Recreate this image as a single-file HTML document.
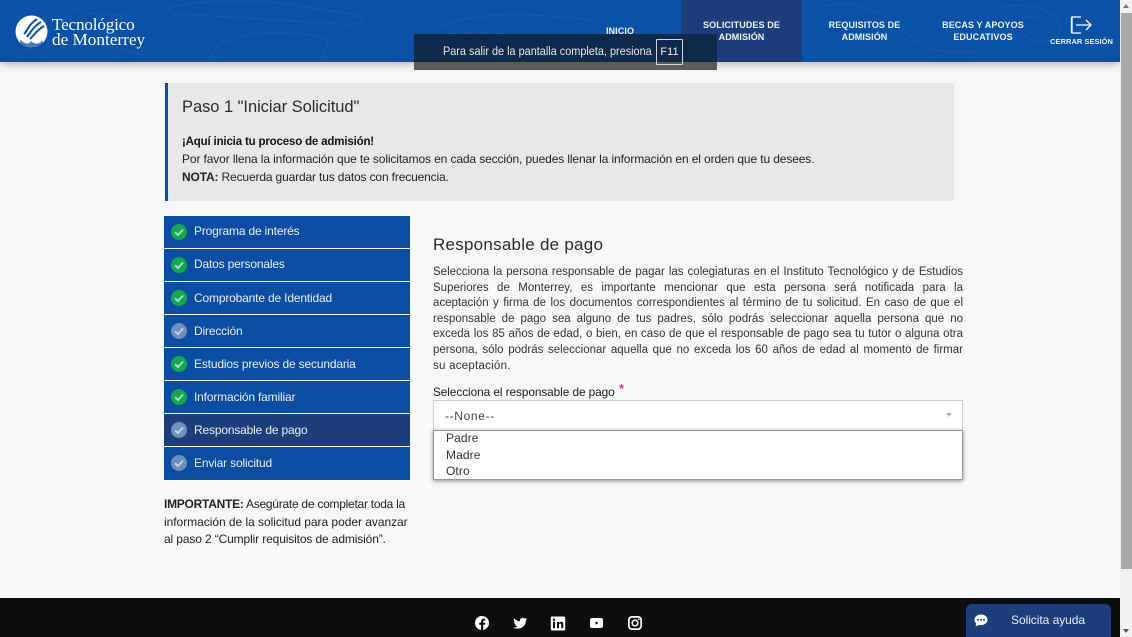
<!DOCTYPE html>
<html lang="es"><head><meta charset="utf-8"><title>Responsable de pago</title>
<style>
html,body{margin:0;padding:0;width:1132px;height:637px;overflow:hidden;background:#f7f8f8}
body{font-family:"Liberation Sans",sans-serif;color:#1c1c1c;position:relative}
.a{position:absolute;white-space:nowrap}
.hdr{left:0;top:0;width:1120px;height:62px;background:#0a51a8;box-shadow:0 2px 8px rgba(0,0,0,.28)}
.nav{color:#eef4fb;font-weight:bold;font-size:9px;line-height:11.5px;letter-spacing:.1px;text-align:center}
.t{font-size:12px;color:#222}
.j{left:433px;width:530px;font-size:11.5px;color:#333;text-align:justify;text-align-last:justify;white-space:nowrap}
.item{left:164px;width:246px;height:32px;background:#0a4da3;color:#e9f1fa;font-size:12px;letter-spacing:-.17px;line-height:31px}
.item span{position:absolute;left:30px;top:1px}
.item svg{position:absolute;left:7px;top:8px}
</style></head><body>

<div class="a hdr"></div>
<svg class="a" style="left:0;top:0" width="1120" height="62" fill="none" stroke="#2b69b6" stroke-opacity=".35" stroke-width="1.2">
<path d="M170 8C200 -2 270 0 300 6S350 12 360 17 355 25 340 24 220 16 172 14Z"/>
<path d="M210 60C215 34 260 30 300 34S325 45 322 60"/>
<path d="M20 52C60 40 120 42 160 62"/>
<path d="M60 0C80 15 120 20 140 10"/>
<path d="M440 26C480 10 540 14 590 20M420 40C450 30 500 30 540 40"/>
<path d="M820 8C850 -4 880 10 900 28S940 58 980 50M1000 8C1030 0 1060 12 1060 28S1030 48 1020 30 1040 14 1048 26"/>
</svg>

<svg class="a" style="left:15px;top:15px" width="33" height="33" viewBox="0 0 33 33">
<circle cx="16.500" cy="16.500" r="16" fill="#fff"/>
<g fill="none" stroke="#0a51a8" stroke-width="2"><path d="M9 19C13 15 14 9 22 4"/><path d="M12 22C16 17 18 12 26 7"/><path d="M15 24C19 20 22 15 29 11"/></g>
<path d="M5 24C9 29 14 30 16 26 20 30 25 29 28 25L27 33H6Z" fill="#0a51a8" opacity=".75"/>
</svg>
<div class="a" style="left:52px;top:18px;color:#fff;font:17.200px/14.500px 'Liberation Serif',serif"><span style="letter-spacing:-.2px">Tecnológico</span><br>de Monterrey</div>

<div class="a" style="left:681px;top:0;width:121px;height:62px;background:#1c3f7c"></div>
<div class="a nav" style="left:590px;top:26px;width:60px">INICIO</div>
<div class="a nav" style="left:681px;top:20px;width:121px">SOLICITUDES DE<br>ADMISIÓN</div>
<div class="a nav" style="left:805px;top:20px;width:119px">REQUISITOS DE<br>ADMISIÓN</div>
<div class="a nav" style="left:924px;top:20px;width:118px">BECAS Y APOYOS<br>EDUCATIVOS</div>
<svg class="a" style="left:1070px;top:16px" width="23" height="18" fill="none" stroke="#fff" stroke-width="1.300"><path d="M11 1H2V17H11M1.500 1V17M6 9H21M16 4L21 9 16 14"/></svg>
<div class="a nav" style="left:1044px;top:36px;width:75px;font-size:7.500px;letter-spacing:.02px">CERRAR SESIÓN</div>

<div class="a" style="left:414px;top:34px;width:303px;height:28px;background:#0d2a4c"></div>
<div class="a" style="left:414px;top:62px;width:303px;height:8px;background:#5a5c5e"></div>
<div class="a" style="left:443px;top:44px;color:#e8e8e8;font-size:12.300px;transform:scaleX(.885);transform-origin:0 0">Para salir de la pantalla completa, presiona</div>
<div class="a" style="left:656px;top:39px;width:25px;height:24px;border:1px solid #d0d4d8;border-radius:1px;color:#eee;font-size:11px;line-height:24px;text-align:center">F11</div>

<div class="a" style="left:165px;top:83px;width:789px;height:118px;background:#e7e8e8;border-left:3px solid #0a51a8;box-sizing:border-box"></div>
<div class="a" style="left:182px;top:98px;font-size:16.500px;letter-spacing:-.05px;color:#2a2a2a">Paso 1 "Iniciar Solicitud"</div>
<div class="a t" style="left:182px;top:136px;font-size:11.500px;font-weight:bold;color:#111;letter-spacing:-.17px">¡Aquí inicia tu proceso de admisión!</div>
<div class="a t" style="left:182px;top:152px;letter-spacing:-.12px">Por favor llena la información que te solicitamos en cada sección, puedes llenar la información en el orden que tu desees.</div>
<div class="a t" style="left:182px;top:170px;letter-spacing:-.15px"><b>NOTA:</b> Recuerda guardar tus datos con frecuencia.</div>

<svg width="0" height="0" style="position:absolute"><defs>
<symbol id="ok" viewBox="0 0 16 16"><circle cx="8" cy="8" r="8" fill="currentColor"/><path d="M4 8.300L7 11 12 5.500" fill="none" stroke="#dfeaf3" stroke-opacity=".75" stroke-width="2"/></symbol></defs></svg>

<div class="a item" style="top:216px"><svg width="16" height="16" color="#12a84f"><use href="#ok"/></svg><span style="top:0">Programa de interés</span></div>
<div class="a item" style="top:249px"><svg width="16" height="16" color="#12a84f"><use href="#ok"/></svg><span style="top:0">Datos personales</span></div>
<div class="a item" style="top:282px"><svg width="16" height="16" color="#12a84f"><use href="#ok"/></svg><span>Comprobante de Identidad</span></div>
<div class="a item" style="top:315px"><svg width="16" height="16" color="#6f8fbd"><use href="#ok"/></svg><span>Dirección</span></div>
<div class="a item" style="top:348px"><svg width="16" height="16" color="#12a84f"><use href="#ok"/></svg><span>Estudios previos de secundaria</span></div>
<div class="a item" style="top:381px"><svg width="16" height="16" color="#12a84f"><use href="#ok"/></svg><span>Información familiar</span></div>
<div class="a item" style="top:414px;background:#1c3f7c"><svg width="16" height="16" color="#6f8fbd"><use href="#ok"/></svg><span>Responsable de pago</span></div>
<div class="a item" style="top:447px;height:33px"><svg width="16" height="16" color="#6f8fbd"><use href="#ok"/></svg><span>Enviar solicitud</span></div>

<div class="a t" style="left:164px;top:497px;letter-spacing:-.26px"><b>IMPORTANTE:</b> Asegúrate de completar toda la</div>
<div class="a t" style="left:164px;top:515px;letter-spacing:-.04px">información de la solicitud para poder avanzar</div>
<div class="a t" style="left:164px;top:532px;letter-spacing:-.13px">al paso 2 “Cumplir requisitos de admisión”.</div>

<div class="a" style="left:433px;top:235px;font-size:17px;letter-spacing:.25px;color:#2a2a2a">Responsable de pago</div>
<div class="a j" style="top:266px">Selecciona la persona responsable de pagar las colegiaturas en el Instituto Tecnológico y de Estudios</div>
<div class="a j" style="top:282px">Superiores de Monterrey, es importante mencionar que esta persona será notificada para la</div>
<div class="a j" style="top:297px">aceptación y firma de los documentos correspondientes al término de tu solicitud. En caso de que el</div>
<div class="a j" style="top:313px">responsable de pago sea alguno de tus padres, sólo podrás seleccionar aquella persona que no</div>
<div class="a j" style="top:328px">exceda los 85 años de edad, o bien, en caso de que el responsable de pago sea tu tutor o alguna otra</div>
<div class="a j" style="top:344px">persona, sólo podrás seleccionar aquella que no exceda los 60 años de edad al momento de firmar</div>
<div class="a" style="left:433px;top:360px;font-size:11.500px;color:#333;letter-spacing:.25px">su aceptación.</div>

<div class="a" style="left:433px;top:385px;font-size:11.800px;letter-spacing:-.06px;color:#1c1c1c">Selecciona el responsable de pago</div>
<div class="a" style="left:619px;top:381px;color:#e8404f;font-size:13px;font-weight:bold">*</div>
<div class="a" style="left:433px;top:400px;width:530px;height:31px;background:#fff;border:1px solid #cfcfcf;box-sizing:border-box"></div>
<div class="a" style="left:445px;top:409px;font-size:12px;color:#444;letter-spacing:.65px">--None--</div>
<div class="a" style="left:946px;top:413px;border:3.500px solid transparent;border-top:4px solid #b5b5b5"></div>
<div class="a" style="left:433px;top:430px;width:530px;height:50px;background:#fff;border:1px solid #999;box-sizing:border-box;box-shadow:0 1px 4px rgba(0,0,0,.45)"></div>
<div class="a" style="left:446px;top:431px;font-size:12px;color:#333;letter-spacing:.1px">Padre</div>
<div class="a" style="left:446px;top:448px;font-size:12px;color:#333;letter-spacing:.1px">Madre</div>
<div class="a" style="left:446px;top:464px;font-size:12px;color:#333;letter-spacing:.1px">Otro</div>

<div class="a" style="left:0;top:598px;width:1120px;height:39px;background:#0c0e10"></div>
<svg class="a" style="left:474px;top:615px" width="170" height="16" viewBox="0 0 170 16" fill="#fff">
<path fill-rule="evenodd" d="M8 1a7 7 0 1 0 0 14A7 7 0 0 0 8 1ZM9.200 15V9.800H11l.3-2H9.200V6.500c0-.6.3-1 1.100-1h1V3.800c-.5-.1-1-.1-1.500-.1-1.700 0-2.700 1-2.700 2.700v1.400H5.200v2h1.900V15Z"/>
<path d="M53 3.500c-.5.2-1 .4-1.600.4.600-.3 1-.9 1.200-1.500-.5.3-1.100.6-1.800.7A2.800 2.800 0 0 0 46 5.200c0 .2 0 .4.100.6-2.300-.1-4.400-1.200-5.800-3-.8 1.300-.4 2.900.9 3.700-.5 0-.9-.1-1.300-.4 0 1.400 1 2.500 2.300 2.800-.4.1-.8.100-1.300 0 .4 1.100 1.400 1.900 2.600 2-1.100.9-2.600 1.300-4.100 1.100 4.500 2.800 12.600.5 12.500-7.400.5-.3 1-.8 1.300-1.300Z" transform="translate(0 .5)"/>
<path fill-rule="evenodd" d="M78 1.500h12a1.200 1.200 0 0 1 1.200 1.200v11.600a1.200 1.200 0 0 1-1.200 1.200H78a1.200 1.200 0 0 1-1.200-1.200V2.700A1.200 1.200 0 0 1 78 1.500ZM79 6.700v6.500h2V6.700Zm1-3.200a1.200 1.200 0 1 0 0 2.400 1.200 1.200 0 0 0 0-2.400Zm3 3.200v6.500h2V9.800c0-1.700 2.300-1.800 2.300 0v3.400h2V9.200c0-3-3.200-3-4.300-1.400v-1.100Z"/>
<path fill-rule="evenodd" d="M118 3h9c1.200 0 2 .8 2 2v6c0 1.200-.8 2-2 2h-9c-1.200 0-2-.8-2-2V5c0-1.200.8-2 2-2Zm3.500 3.200v3.600l3-1.800Z" transform="translate(0 0)"/>
<path fill-rule="evenodd" d="M158 1h6a4 4 0 0 1 4 4v6a4 4 0 0 1-4 4h-6a4 4 0 0 1-4-4V5a4 4 0 0 1 4-4Zm0 1.700A2.300 2.300 0 0 0 155.700 5v6a2.300 2.300 0 0 0 2.300 2.300h6a2.300 2.300 0 0 0 2.300-2.300V5A2.300 2.300 0 0 0 164 2.700Zm3 1.700a3.600 3.600 0 1 1 0 7.200 3.600 3.600 0 0 1 0-7.200Zm0 1.600a2 2 0 1 0 0 4 2 2 0 0 0 0-4Zm3.700-2.600a.9.9 0 1 1 0 1.800.9.900 0 0 1 0-1.800Z"/>
</svg>

<div class="a" style="left:966px;top:604px;width:145px;height:33px;background:#1c3f7c;border-radius:6px 6px 0 0"></div>
<svg class="a" style="left:974px;top:614px" width="14" height="13" viewBox="0 0 14 13"><path d="M7 0.500C3.300.5.500 2.900.500 5.800c0 1.400.6 2.600 1.700 3.600L1.500 12.500 5 10.900c.6.1 1.300.2 2 .2 3.700 0 6.500-2.400 6.500-5.300S10.700.5 7 .5Z" fill="#fff"/><g fill="#1c3f7c"><circle cx="4" cy="5.800" r="1"/><circle cx="7" cy="5.800" r="1"/><circle cx="10" cy="5.800" r="1"/></g></svg>
<div class="a" style="left:1011px;top:613px;color:#e8eef7;font-size:12px;letter-spacing:-.05px">Solicita ayuda</div>

<div class="a" style="left:1120px;top:0;width:12px;height:637px;background:#f1f1f1"></div>
<div class="a" style="left:1121px;top:13px;width:11px;height:556px;background:#a8a8a8"></div>
<div class="a" style="left:1123px;top:4px;border:3.500px solid transparent;border-bottom:4px solid #777;border-top:0"></div>
<div class="a" style="left:1123px;top:629px;border:3.500px solid transparent;border-top:4px solid #555;border-bottom:0"></div>
</body></html>
